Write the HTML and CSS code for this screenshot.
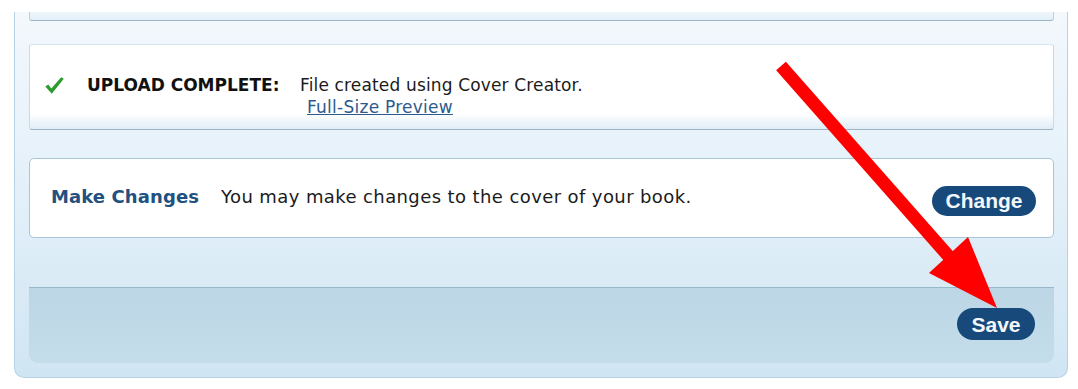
FILE: index.html
```html
<!DOCTYPE html>
<html>
<head>
<meta charset="utf-8">
<link rel="stylesheet" href="styles.css">
</head>
<body>
<div class="page">
  <div class="panel">
    <div class="card card-top"></div>
    <div class="card card-upload">
      <svg class="check" width="19" height="17" viewBox="0 0 19 17">
        <path d="M0.3 9.6 L3.3 7.6 L6.3 11.5 L16.2 0.2 L18.8 1.7 L6.8 16.7 Z" fill="#2e9b2e"/>
      </svg>
      <div class="upload-label">UPLOAD COMPLETE:</div>
      <div class="upload-msg">
        <div>File created using Cover Creator.</div>
        <a class="preview-link" href="#">Full-Size Preview</a>
      </div>
    </div>
    <div class="card card-change">
      <div class="change-label">Make Changes</div>
      <div class="change-text">You may make changes to the cover of your book.</div>
      <button class="pill-btn change-btn">Change</button>
    </div>
    <div class="footer">
      <button class="pill-btn save-btn">Save</button>
    </div>
  </div>
  <svg class="arrow" width="1078" height="389" viewBox="0 0 1078 389">
    <line x1="781" y1="66" x2="952" y2="260" stroke="#ff0000" stroke-width="13"/>
    <polygon points="929,273 968,237 997,308" fill="#ff0000"/>
  </svg>
</div>
</body>
</html>
```

FILE: styles.css
```css
html, body {
  margin: 0;
  padding: 0;
  background: #ffffff;
}

body {
  font-family: "DejaVu Sans", Verdana, sans-serif;
  color: #1b1b1b;
}

.page {
  position: relative;
  width: 1078px;
  height: 389px;
  padding: 12px 10px 0 14px;
  box-sizing: border-box;
}

.panel {
  border: 1px solid #b6d3e5;
  border-top: none;
  border-radius: 0 0 10px 10px;
  background: linear-gradient(#f3f8fc 0%, #e3f0f9 50%, #d0e5f3 100%);
  padding: 0 13px 14px 14px;
  display: flex;
  flex-direction: column;
}

.card {
  box-sizing: border-box;
  background: #ffffff;
}

.card-top {
  height: 9px;
  background: linear-gradient(#eef6fb, #e2eff8);
  border: 1px solid #b9d0de;
  border-top: none;
  border-bottom-color: #9db5c5;
  border-radius: 0 0 3px 3px;
}

.card-upload {
  margin-top: 23px;
  height: 86px;
  display: flex;
  align-items: flex-start;
  padding: 30px 0 0 15px;
  background: linear-gradient(#ffffff 0%, #ffffff 82%, #dfedf6 100%);
  border: 1px solid #c6dbe8;
  border-top-color: #d3e6f1;
  border-bottom-color: #9cb5c6;
  border-radius: 3px;
}

.check {
  flex: none;
  margin-top: 2px;
  width: 19px;
  height: 17px;
}

.upload-label {
  flex: none;
  width: 213px;
  margin-left: 23px;
  font-weight: bold;
  font-size: 17px;
  line-height: 21px;
  color: #111111;
}

.upload-msg {
  font-size: 17px;
  letter-spacing: 0.15px;
  line-height: 21px;
}

.preview-link {
  display: inline-block;
  padding: 1px 0 0 7px;
  letter-spacing: 0.25px;
  color: #2c5a8c;
  text-decoration: underline;
}

.card-change {
  margin-top: 28px;
  height: 80px;
  display: flex;
  align-items: center;
  padding: 0 17px 4px 21px;
  border: 1px solid #a9c6d8;
  border-radius: 5px;
}

.change-label {
  flex: none;
  width: 170px;
  font-weight: bold;
  font-size: 18px;
  letter-spacing: 0.1px;
  color: #22507f;
}

.change-text {
  flex: 1;
  font-size: 18px;
  letter-spacing: 0.4px;
}

.pill-btn {
  flex: none;
  border: none;
  background: #174a7b;
  color: #f4f7fb;
  font-family: "Liberation Sans", Arial, sans-serif;
  font-weight: bold;
  font-size: 21px;
  border-radius: 16px;
  padding: 0;
  line-height: 1;
}

.change-btn {
  width: 104px;
  height: 30px;
  margin-top: 9px;
}

.footer {
  margin-top: 49px;
  height: 76px;
  box-sizing: border-box;
  border-top: 1px solid #98b9cc;
  border-radius: 0 0 9px 9px;
  background: linear-gradient(#bcd6e5, #c3ddeb);
  display: flex;
  align-items: center;
  justify-content: flex-end;
  padding: 0 19px 3px 0;
}

.save-btn {
  width: 78px;
  height: 32px;
}

.arrow {
  position: absolute;
  left: 0;
  top: 0;
  pointer-events: none;
}
```
